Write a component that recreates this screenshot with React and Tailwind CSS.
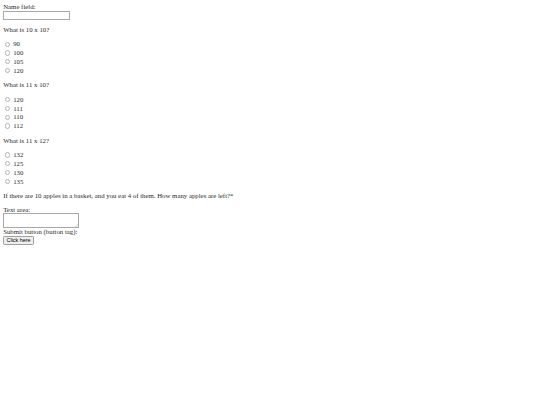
const questions = [
  { q: 'What is 10 x 10?', options: ['90', '100', '105', '120'] },
  { q: 'What is 11 x 10?', options: ['120', '111', '110', '112'] },
  { q: 'What is 11 x 12?', options: ['132', '125', '130', '135'] },
]

function Radio({ label }) {
  return (
    <div className="flex items-center h-[8.8px]">
      <span className="ml-[2px] mr-[2.8px] w-[5.2px] h-[5.2px] rounded-full border-[0.5px] border-[#b4b4b4] bg-white" />
      <span>{label}</span>
    </div>
  )
}

export default function App() {
  return (
    <div
      className="min-h-[405px] bg-white p-[3.2px] text-[6.8px] leading-[7.4px] text-[#2a2a2a]"
      style={{ fontFamily: '"Liberation Serif", "Times New Roman", serif' }}
    >
      <div>Name field:</div>
      <div className="w-[67px] h-[9px] border-[0.5px] border-[#a8a8a8] bg-white" />

      {questions.map((item) => (
        <div key={item.q}>
          <p className="my-[6.4px]">{item.q}</p>
          {item.options.map((o) => (
            <Radio key={o} label={o} />
          ))}
        </div>
      ))}

      <p className="my-[6.4px]">
        If there are 10 apples in a basket, and you eat 4 of them. How many apples are left?*
      </p>

      <div>Text area:</div>
      <div className="relative w-[76px] h-[15px] border-[0.5px] border-[#a8a8a8] bg-white">
        {/* resize grip */}
        <svg className="absolute right-[0.5px] bottom-[0.5px]" width="3" height="3" viewBox="0 0 6 6">
          <path d="M6 0L0 6M6 3L3 6" stroke="#aaa" strokeWidth="0.8" />
        </svg>
      </div>
      <div>Submit button (button tag):</div>
      <button
        className="h-[9px] px-[2.4px] rounded-[1.2px] border-[0.5px] border-[#a0a0a0] bg-[#efefef] text-[5.4px] leading-[5.4px] text-black"
        style={{ fontFamily: '"Liberation Sans", Arial, sans-serif' }}
      >
        Click here
      </button>
    </div>
  )
}
